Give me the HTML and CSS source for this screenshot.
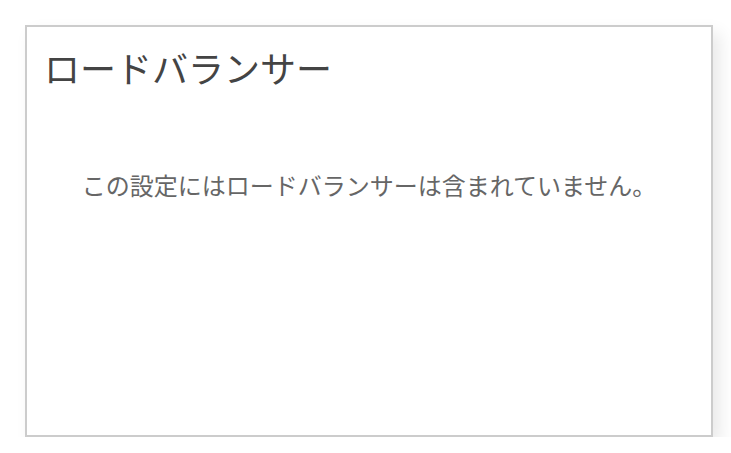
FILE: index.html
```html
<!DOCTYPE html>
<html lang="ja">
<head>
<meta charset="utf-8">
<link rel="stylesheet" href="styles.css">
</head>
<body>
<div class="card">
  <h1 class="title">ロードバランサー</h1>
  <p class="message">この設定にはロードバランサーは含まれていません。</p>
</div>
</body>
</html>
```
FILE: styles.css
```css
html, body {
  margin: 0;
  padding: 0;
  background: #fff;
}
body {
  padding: 25px 18px 0 25px;
  font-family: "Noto Sans CJK JP", "Noto Sans", sans-serif;
}
.card {
  width: 684px;
  height: 408px;
  border: 2px solid #ccc;
  background: #fff;
  box-shadow: 7px 8px 16px rgba(0, 0, 0, 0.09);
  padding: 0;
  box-sizing: content-box;
}
.title {
  margin: 0;
  padding: 18px 0 0 17px;
  font-size: 36px;
  font-weight: 400;
  line-height: 44px;
  color: #444;
}
.message {
  margin: 0;
  padding-top: 81px;
  text-align: center;
  font-size: 24px;
  line-height: 30px;
  color: #666;
}
```
